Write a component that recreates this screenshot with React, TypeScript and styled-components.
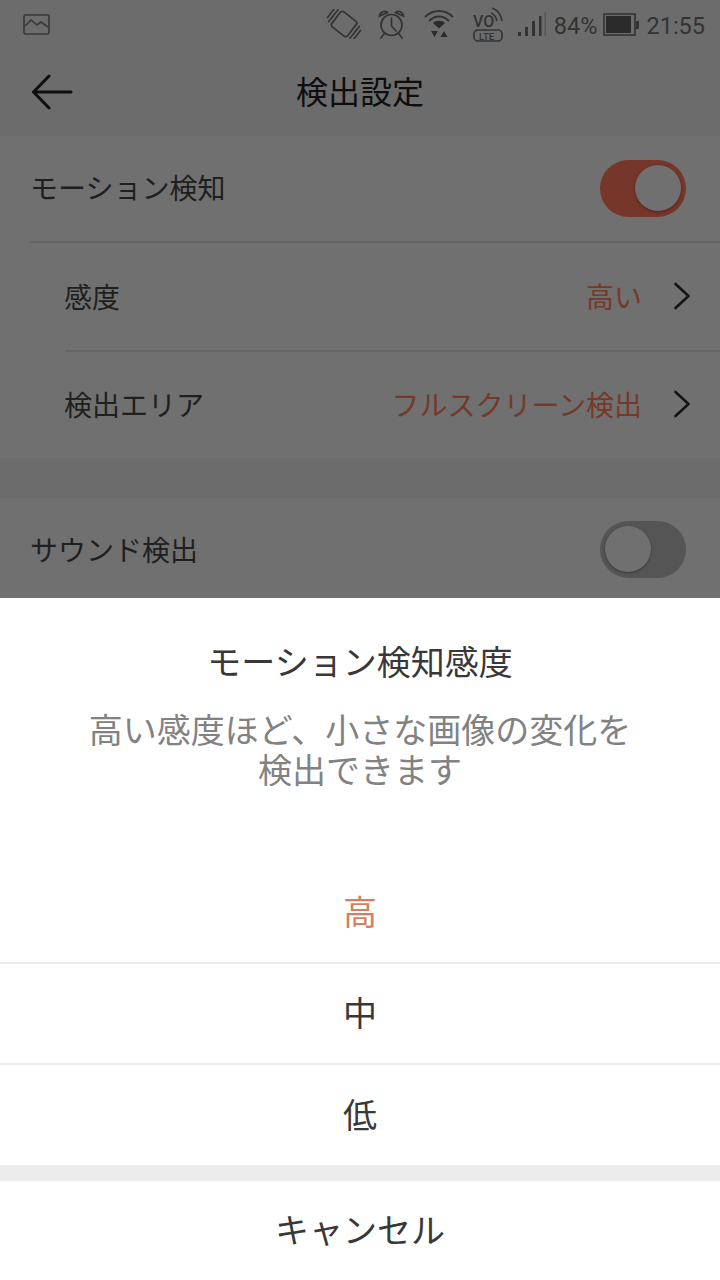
import React from 'react'
import styled, { createGlobalStyle } from 'styled-components'

const GlobalStyle = createGlobalStyle`
  html, body { margin: 0; padding: 0; background: #fff; }
  * { box-sizing: border-box; }
  body { font-family: "Noto Sans CJK JP", "Noto Sans", sans-serif; }
`

const Screen = styled.div`
  width: 720px;
  height: 1280px;
  display: flex;
  flex-direction: column;
  overflow: hidden;
  background: #6c6c6c;
`

const Dimmed = styled.div`
  height: 598px;
  display: flex;
  flex-direction: column;
`

const StatusBar = styled.div`
  height: 48px;
  display: flex;
  align-items: center;
  justify-content: space-between;
  padding: 0 15px 0 23px;
`

const StatusIcons = styled.div`
  display: flex;
  align-items: center;
`

const StatusText = styled.span`
  font-family: Roboto, sans-serif;
  font-size: 23.5px;
  line-height: 48px;
  padding-top: 3px;
  color: #333;
  margin-left: ${p => p.$left ?? 0}px;
`

const Glyph = styled.svg`
  display: block;
  flex: none;
  margin-left: ${p => p.$left ?? 0}px;
  overflow: visible;
`

const Header = styled.div`
  height: 88px;
  display: flex;
  align-items: center;
  justify-content: center;
  position: relative;
  padding-bottom: 4px;
`

const BackButton = styled.svg`
  position: absolute;
  left: 31px;
  top: 26px;
`

const HeaderTitle = styled.h1`
  margin: 0;
  font-size: 32px;
  font-weight: 400;
  color: #0e0e0e;
`

const Group = styled.div`
  background: #707070;
  margin-bottom: ${p => p.$gap ?? 0}px;
`

const Row = styled.div`
  height: ${p => p.$height}px;
  margin-left: ${p => p.$inset}px;
  padding-right: ${p => (p.$toggle ? 34 : 29)}px;
  padding-bottom: ${p => p.$lift ?? 0}px;
  padding-top: ${p => p.$drop ?? 0}px;
  display: flex;
  align-items: center;
  justify-content: space-between;
  border-bottom: ${p => (p.$line ? '2px solid #646464' : 'none')};
`

const RowLabel = styled.span`
  font-size: 28px;
  color: #1f1f1f;
  margin: 0 0 ${p => p.$lift ?? 0}px ${p => p.$pull ?? 0}px;
`

const RowValue = styled.div`
  display: flex;
  align-items: center;
  gap: 31px;
`

const ValueText = styled.span`
  font-size: 28px;
  color: #75392a;
`

const Toggle = styled.div`
  width: 86px;
  height: 57px;
  border-radius: 29px;
  background: ${p => (p.$on ? '#76362a' : '#555')};
  display: flex;
  align-items: center;
  justify-content: ${p => (p.$on ? 'flex-end' : 'flex-start')};
  padding: 0 5px;
`

const Knob = styled.div`
  width: 46px;
  height: 46px;
  border-radius: 50%;
  background: #707070;
  box-shadow: 0 1px 3px rgba(0, 0, 0, 0.35);
`

const Sheet = styled.div`
  flex: 1;
  display: flex;
  flex-direction: column;
  background: #ebebeb;
`

const SheetBody = styled.div`
  background: #fff;
  padding-top: 38px;
  text-align: center;
`

const SheetTitle = styled.h2`
  margin: 0;
  font-size: 34px;
  line-height: 50px;
  font-weight: 400;
  color: #383838;
`

const SheetText = styled.p`
  margin: 23px 0 0;
  font-size: 34px;
  line-height: 40px;
  color: #828282;
`

const OptionList = styled.div`
  margin-top: 74px;
`

const Option = styled.div`
  height: ${p => p.$height ?? 101}px;
  display: flex;
  align-items: center;
  justify-content: center;
  padding-bottom: 4px;
  font-size: 34px;
  color: ${p => (p.$active ? '#d67f60' : '#383838')};
  border-bottom: ${p => (p.$line ? '2px solid #ebebeb' : 'none')};
`

const CancelButton = styled.div`
  margin-top: 16px;
  flex: 1;
  background: #fff;
  display: flex;
  align-items: center;
  justify-content: center;
  padding-bottom: 4px;
  font-size: 34px;
  color: #383838;
`

function Chevron() {
  return (
    <svg width="18" height="28" viewBox="0 0 18 28" fill="none" stroke="#141414" strokeWidth="2.6" strokeLinecap="round" strokeLinejoin="round">
      <path d="M2.5 2 L15.5 14 L2.5 26" />
    </svg>
  )
}

function StatusBarIcons() {
  return (
    <StatusIcons>
      {/* vibrate */}
      <Glyph width="34" height="30" viewBox="0 0 34 30" fill="none" stroke="#333" strokeWidth="1.7" strokeLinecap="round">
        <g transform="rotate(38 17 15)">
          <rect x="7" y="5.5" width="20" height="19" rx="2.5" />
          <path d="M3.5 7.5 V22.5 M0 10 V20 M30.5 7.5 V22.5 M34 10 V20" />
        </g>
      </Glyph>
      {/* alarm */}
      <Glyph $left={17} width="27" height="29" viewBox="0 0 27 29" fill="none" stroke="#333" strokeWidth="1.7" strokeLinecap="round">
        <circle cx="13.5" cy="15" r="10.5" />
        <path d="M13.5 8 V16 L18 21 M1.5 6 C2 2 7 0 9.5 2.5 Z M25.5 6 C25 2 20 0 17.5 2.5 Z M6 24 L3 28 M21 24 L24 28" />
      </Glyph>
      {/* wifi */}
      <Glyph $left={19} width="30" height="28" viewBox="0 0 30 28" fill="none" stroke="#333" strokeWidth="1.8">
        <path d="M1 7 C9 -1 21 -1 29 7 M5 11 C11 5 19 5 25 11" />
        <path d="M9 13 C12 10 18 10 21 13 L15 18.5 Z" fill="#2b2b2b" stroke="none" />
        <path d="M7 21 H14 L10.5 27 Z M16.5 27 H23.5 L20 21 Z" fill="#2b2b2b" stroke="none" />
      </Glyph>
      {/* volte */}
      <Glyph $left={19} width="31" height="35" viewBox="0 0 31 35" fill="none" stroke="#333" strokeWidth="1.6">
        <text x="0" y="20" fontFamily="Roboto, sans-serif" fontSize="16" fontWeight="500" fill="#333" stroke="none">VO</text>
        <path d="M19 1 C25 3 28 8 29 14 M18 6 C21 7 23 10 24 14" />
        <rect x="1" y="23" width="28" height="11" rx="4" />
        <text x="6" y="32.5" fontFamily="Roboto, sans-serif" fontSize="9.5" fontWeight="500" fill="#333" stroke="none">LTE</text>
      </Glyph>
      {/* signal */}
      <Glyph $left={14} width="28" height="24" viewBox="0 0 28 24" fill="#333">
        <rect x="0" y="20" width="3" height="4" />
        <rect x="7" y="15" width="3" height="9" />
        <rect x="14" y="9" width="3" height="15" />
        <rect x="21" y="4" width="2.5" height="20" />
        <rect x="26.5" y="0" width="1.5" height="24" fill="#585858" />
      </Glyph>
      <StatusText $left={8}>84%</StatusText>
      {/* battery */}
      <Glyph $left={6} width="37" height="23" viewBox="0 0 37 23">
        <rect x="1" y="1" width="31" height="21" fill="none" stroke="#333" strokeWidth="1.6" />
        <rect x="3" y="3" width="25" height="17" fill="#2b2b2b" />
        <rect x="33" y="8" width="3" height="8" fill="#333" />
      </Glyph>
      <StatusText $left={6}>21:55</StatusText>
    </StatusIcons>
  )
}

export default function App() {
  return (
    <Screen>
      <GlobalStyle />
      <Dimmed>
        <StatusBar>
          <Glyph width="27" height="21" viewBox="0 0 27 21" fill="none" stroke="#383838" strokeWidth="1.6">
            <rect x="1" y="1" width="25" height="19" rx="1.5" />
            <path d="M2 12 L8 6 L14 11 L18 8 L25 13" />
          </Glyph>
          <StatusBarIcons />
        </StatusBar>
        <Header>
          <BackButton width="44" height="36" viewBox="0 0 44 36" fill="none" stroke="#0e0e0e" strokeWidth="3" strokeLinecap="round" strokeLinejoin="round">
            <path d="M2.5 18 H40 M18 2 L2.5 18 L18 34" />
          </BackButton>
          <HeaderTitle>検出設定</HeaderTitle>
        </Header>
        <Group $gap={40}>
          <Row $height={107} $inset={30} $lift={1} $line $toggle>
            <RowLabel $lift={2}>モーション検知</RowLabel>
            <Toggle $on><Knob /></Toggle>
          </Row>
          <Row $height={109} $inset={65} $lift={1} $line>
            <RowLabel $pull={-1}>感度</RowLabel>
            <RowValue>
              <ValueText>高い</ValueText>
              <Chevron />
            </RowValue>
          </Row>
          <Row $height={106} $inset={65} $lift={3}>
            <RowLabel $pull={-1}>検出エリア</RowLabel>
            <RowValue>
              <ValueText>フルスクリーン検出</ValueText>
              <Chevron />
            </RowValue>
          </Row>
        </Group>
        <Group>
          <Row $height={100} $inset={30} $drop={2} $toggle>
            <RowLabel>サウンド検出</RowLabel>
            <Toggle><Knob /></Toggle>
          </Row>
        </Group>
      </Dimmed>
      <Sheet>
        <SheetBody>
          <SheetTitle>モーション検知感度</SheetTitle>
          <SheetText>高い感度ほど、小さな画像の変化を<br />検出できます</SheetText>
          <OptionList>
            <Option $active $line>高</Option>
            <Option $line>中</Option>
            <Option $height={100}>低</Option>
          </OptionList>
        </SheetBody>
        <CancelButton>キャンセル</CancelButton>
      </Sheet>
    </Screen>
  )
}
